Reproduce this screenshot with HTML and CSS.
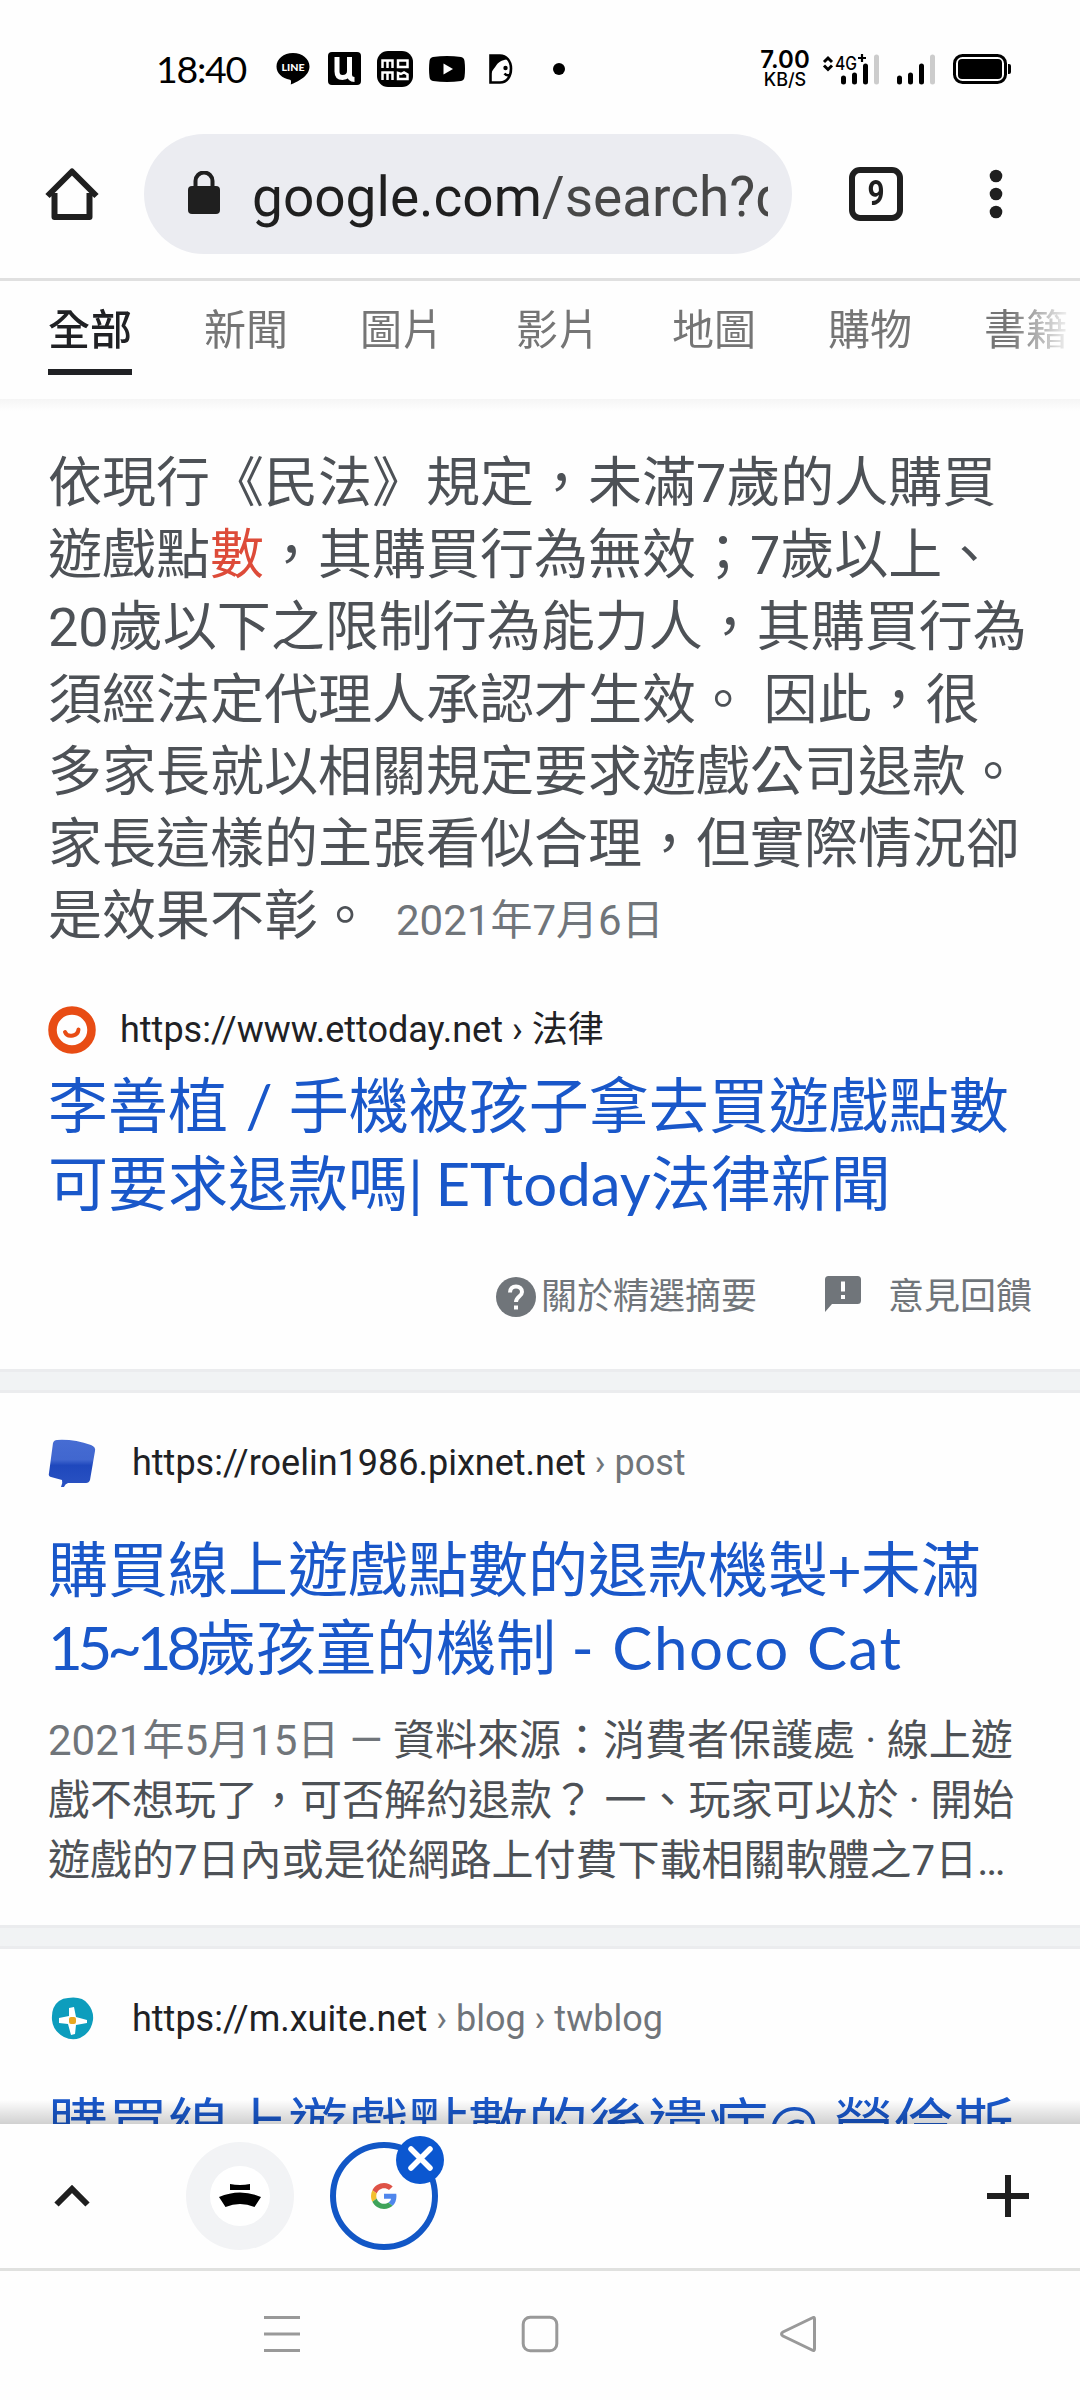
FILE: index.html
```html
<!DOCTYPE html>
<html lang="zh-Hant">
<head>
<meta charset="utf-8">
<title>google.com/search</title>
<link rel="stylesheet" href="styles.css">
</head>
<body>
<div class="screen">
  <header class="status">
    <span class="clock">18:40</span>
    <svg class="app line" width="36" height="36" viewBox="0 0 36 36"><path d="M18 2C8.500 2 1.500 8 1.500 15.500c0 6.500 5.500 12 13.500 13.200 1.500.5 1 2.300.8 4.800C22 31 34.500 25.500 34.500 15.500 34.500 8 27.500 2 18 2z"/><text x="18" y="20" text-anchor="middle" textLength="23" lengthAdjust="spacingAndGlyphs">LINE</text></svg>
    <svg class="app" width="33" height="33" viewBox="0 0 33 33"><rect width="33" height="33" rx="4"/><path class="u" d="M9 5v14.500c0 4 2 6 5.500 6 4 0 7-2.500 7-6.500V5M21.500 17v6c0 2.500 1.500 4.500 5 4.500"/></svg>
    <svg class="app" width="36" height="36" viewBox="0 0 36 36"><rect width="36" height="36" rx="11"/><path class="momo" d="M5.500 17V9.500h10V17M10.500 9.500V17M21 9.500h9.500V16H21zM5.500 29v-7.500h10V29M10.500 21.500V29"/><path class="momo" d="M21 28v-6l3 1 3-1.500 3.500 2V28z"/></svg>
    <svg class="app" width="36" height="26" viewBox="0 0 36 26"><path d="M4 1q14-2 28 0 3 .5 3.500 4 1 8 0 16-.5 3.500-3.500 4-14 2-28 0-3-.5-3.500-4-1-8 0-16Q1 1.500 4 1z"/><path class="white" d="M14.500 7.500v11L24 13z"/></svg>
    <svg class="app face" width="24" height="30" viewBox="0 0 24 30"><path class="face-line" d="M1.500 1.500h9.500c6 0 11 5 11 13s-4 14-11 14H1.500z"/><path d="M1 1h12c3 1 5 2 6.500 4.500-5 0-9 1.500-12 5.500C6 14 3 16 2.500 19L1 20z"/><circle cx="16.500" cy="14" r="2.200"/><path class="face-line" d="M15.500 19.500q2 2.500 5 1.500"/></svg>
    <i class="dot"></i>
    <div class="speed"><b>7.00</b><span>KB/S</span></div>
    <svg class="signal" width="60" height="36" viewBox="0 0 60 36"><path class="arrows" d="M2 11l4-4 4 4M2 14.500l4 4 4-4"/><text class="g4" x="13" y="18.500" textLength="22" lengthAdjust="spacingAndGlyphs">4G</text><path class="arrows thin" d="M36 7h8M40 3v8"/><path class="bars" d="M21.500 27v4M32.500 24v7M43.500 15v16"/><path class="bars off" d="M54.500 6v25"/></svg>
    <svg class="signal2" width="40" height="36" viewBox="0 0 40 36"><path class="bars" d="M2.500 27v4M13.500 24v7M24.500 15v16"/><path class="bars off" d="M35.500 6v25"/></svg>
    <svg class="battery" width="60" height="32" viewBox="0 0 60 32"><rect class="shell" x="1.500" y="2.500" width="51" height="27" rx="8"/><rect x="5" y="6" width="44" height="20" rx="4"/><path d="M55 11h1q2 0 2 2v6q0 2-2 2h-1z"/></svg>
  </header>

  <div class="toolbar">
    <svg class="home" width="56" height="56" viewBox="0 0 56 56"><path d="M10.500 27v24h35V27M3.500 30L28 5.500 52.500 30"/></svg>
    <div class="omnibox">
      <svg width="34" height="44" viewBox="0 0 34 44"><rect x="1" y="15" width="32" height="28" rx="4"/><path d="M8.500 17v-7a8.500 8.500 0 0 1 17 0v7"/></svg>
      <span class="url">google.com<em>/search?q</em></span>
    </div>
    <span class="tab-count"><b>9</b></span>
    <svg class="more" width="14" height="50" viewBox="0 0 14 50"><circle cx="7" cy="7" r="6.300"/><circle cx="7" cy="25" r="6.300"/><circle cx="7" cy="43" r="6.300"/></svg>
  </div>

  <nav class="tabs">
    <a class="on">全部</a><a>新聞</a><a>圖片</a><a>影片</a><a>地圖</a><a>購物</a><a>書籍</a>
  </nav>

  <main class="results">
    <section class="card featured">
      <p class="answer">依現行《民法》規定，未滿7歲的人購買<br>遊戲點<mark>數</mark>，其購買行為無效；7歲以上、<br>20歲以下之限制行為能力人，其購買行為<br>須經法定代理人承認才生效。 因此，很<br>多家長就以相關規定要求遊戲公司退款。<br>家長這樣的主張看似合理，但實際情況卻<br>是效果不彰。<time>2021年7月6日</time></p>
      <div class="source tight">
        <svg width="48" height="48" viewBox="0 0 48 48"><circle class="et-ring" cx="24" cy="24" r="19.500"/><path class="et-smile" d="M17 26q2 5 8 3.500 5-1 5.500-6"/></svg>
        <span>https://www.ettoday.net › 法律</span>
      </div>
      <h3 class="title">李善植 <span class="slash">/</span> 手機被孩子拿去買遊戲點數<br>可要求退款嗎| <span class="et">ETtoday</span>法律新聞</h3>
      <div class="links">
        <svg width="40" height="40" viewBox="0 0 40 40"><circle cx="20" cy="20" r="20"/><path class="q" d="M14 15.500c0-4 2.500-6 6-6s6 2.200 6 5.500c0 4.500-6 4.800-6 10"/><path class="q" d="M20 28.500v4"/></svg>
        <span>關於精選摘要</span>
        <svg class="fb" width="36" height="36" viewBox="0 0 36 36"><path d="M3.500 0h29Q36 0 36 3.500v21q0 3.500-3.500 3.500H7l-7 8V3.500Q0 0 3.500 0z"/><path class="q" d="M18 5.500v10M18 19v4"/></svg>
        <span>意見回饋</span>
      </div>
    </section>
    <section class="card second">
      <div class="source">
        <svg width="48" height="48" viewBox="0 0 48 48"><defs><linearGradient id="bubble" x2="0" y2="1"><stop stop-color="#466cd3"/><stop offset=".42" stop-color="#4167cf"/><stop offset=".54" stop-color="#1f48bd"/><stop offset="1" stop-color="#2a52c2"/></linearGradient></defs><path fill="url(#bubble)" d="M9 1q17-1 34 5 5 2 4 6l-5 29q-1 3-4 3H20q-3 1-4 4h-3q2-4 1-7L3 38q-3-1-2-4L5 4q1-3 4-3z"/></svg>
        <span>https://roelin1986.pixnet.net<em> › post</em></span>
      </div>
      <h3 class="title">購買線上遊戲點數的退款機製<span class="sum">+</span>未滿<br><span class="age">15~18</span>歲孩童的機制 <span class="cat">- Choco Cat</span></h3>
      <p class="desc"><em>2021年5月15日 — </em>資料來源：消費者保護處 · 線上遊<br>戲不想玩了，可否解約退款？ 一、玩家可以於 · 開始<br>遊戲的7日內或是從網路上付費下載相關軟體之7日…</p>
    </section>
    <section class="card third">
      <div class="source">
        <svg width="48" height="48" viewBox="0 0 48 48"><path class="xu" d="M20 3q14-2 20 6 6 7 5 16-2 13-13 18-8 3-16-1Q5 36 4 25 3 12 11 6q4-3 9-3z"/><path class="petals" d="M21 13l5-1 2 10 11 3v3l-11 2-1 9-4 1-3-11-9-1v-5l10-2z"/><rect class="pollen" x="21" y="22" width="7" height="7" rx="2"/></svg>
        <span>https://m.xuite.net<em> › blog › twblog</em></span>
      </div>
      <h3 class="title">購買線上遊戲點數的後遺症@ 勞倫斯</h3>
    </section>
  </main>

  <div class="strip">
    <svg class="up" width="40" height="26" viewBox="0 0 40 26"><path d="M4.500 21.500L20 6l15.500 15.500"/></svg>
    <div class="bubble">
      <span><svg width="44" height="26" viewBox="0 0 44 26"><path d="M12 1q10 2 20 0v6H12zM1 14q21-9 42 0l-6.500 10q-14.500-6-29 0z"/></svg></span>
    </div>
    <div class="bubble active">
      <svg class="g" width="26" height="26" viewBox="0 0 48 48"><path fill="#de5246" d="M24 9.500c3.540 0 6.710 1.220 9.210 3.600l6.850-6.850C35.900 2.380 30.470 0 24 0 14.620 0 6.510 5.380 2.560 13.220l7.980 6.190C12.430 13.720 17.740 9.500 24 9.500z"/><path fill="#4f86ec" d="M46.980 24.550c0-1.570-.15-3.090-.38-4.550H24v9.020h12.940c-.58 2.960-2.260 5.480-4.780 7.180l7.730 6c4.510-4.180 7.090-10.360 7.090-17.650z"/><path fill="#f2bf2e" d="M10.530 28.590A14.500 14.500 0 0 1 9.770 24c0-1.600.27-3.140.76-4.590l-7.980-6.190A23.900 23.900 0 0 0 0 24c0 3.880.92 7.540 2.560 10.780z"/><path fill="#3fa35a" d="M24 48c6.480 0 11.930-2.130 15.890-5.810l-7.730-6c-2.150 1.450-4.920 2.300-8.160 2.300-6.260 0-11.570-4.220-13.470-9.910l-7.980 6.190C6.510 42.620 14.620 48 24 48z"/></svg>
      <svg class="close" width="48" height="48" viewBox="0 0 48 48"><circle cx="24" cy="24" r="24"/><path d="M15 13l19 19M34 13L15 32"/></svg>
    </div>
    <svg class="plus" width="42" height="42" viewBox="0 0 42 42"><path d="M21 0v42M0 21h42"/></svg>
  </div>

  <footer class="sysnav">
    <svg width="38" height="38" viewBox="0 0 38 38"><path d="M1 2.500h36M1 19h36M1 35.500h36"/></svg>
    <svg width="38" height="38" viewBox="0 0 38 38"><rect x="2.200" y="2.200" width="33.600" height="33.600" rx="7"/></svg>
    <svg width="38" height="38" viewBox="0 0 38 38"><path d="M35.500 4v30q0 2.500-2.500 1L4 21q-3-2 0-4L33 3q2.500-1.500 2.500 1z"/></svg>
  </footer>
</div>
</body>
</html>
```

FILE: styles.css
```css
* { box-sizing: border-box; }
body {
  margin: 0;
  background: #fff;
  font-family: Roboto, "Noto Sans CJK TC", sans-serif;
  text-spacing-trim: space-all;
}
em { font-style: normal; }
svg { display: block; flex: none; }
h3, p { margin: 0; font-weight: 400; }

.screen {
  width: 1080px;
  height: 2400px;
  display: flex;
  flex-direction: column;
  overflow: hidden;
  background: #fefefe;
}

/* Status bar */
.status {
  height: 134px;
  padding: 3px 67px 0 156px;
  display: flex;
  align-items: center;
}
.clock { font: 37.500px/44px Lato, sans-serif; width: 119px; letter-spacing: -1.300px; }
.app { margin-right: 16px; }
.app.line { margin-right: 17px; }
.line text { font: 900 9.500px Lato, sans-serif; fill: #fff; }
.white { fill: #fff; }
.u { fill: none; stroke: #fff; stroke-width: 5; }
.momo { fill: none; stroke: #fff; stroke-width: 2.500; }
.face { margin-left: 8px; }
.face-line { fill: none; stroke: #000; stroke-width: 2.600; }
.dot { width: 12px; height: 12px; margin-left: 24px; border-radius: 50%; background: #000; }
.speed {
  width: 62px;
  margin-left: auto;
  display: flex;
  flex-direction: column;
  align-items: center;
  font-family: Inter, sans-serif;
}
.speed b { font-size: 24px; line-height: 22px; font-weight: 600; }
.speed span { font-size: 18px; line-height: 18px; font-weight: 500; }
.signal { margin-left: 6px; }
.signal2 { margin-left: 15px; }
.g4 { font: 500 18px Inter, sans-serif; }
.arrows { fill: none; stroke: #000; stroke-width: 3; }
.arrows.thin { stroke-width: 2.200; }
.bars { stroke: #000; stroke-width: 5; stroke-linecap: round; }
.bars.off { stroke: #ccc; }
.battery { margin-left: 16px; }
.shell { fill: none; stroke: #000; stroke-width: 3; }

/* Browser toolbar */
.toolbar {
  height: 147px;
  padding: 0 77px 24px 44px;
  border-bottom: 3px solid #e0e0e0;
  display: flex;
  align-items: center;
  justify-content: space-between;
}
.home path { fill: none; stroke: #1f1f1f; stroke-width: 6; stroke-linejoin: round; }
.omnibox {
  width: 648px;
  height: 120px;
  margin-right: 13px;
  padding: 0 24px 0 43px;
  border-radius: 60px;
  background: #ebecf1;
  display: flex;
  align-items: center;
}
.omnibox svg { fill: #1f1f1f; margin-bottom: 2px; }
.omnibox svg path { fill: none; stroke: #1f1f1f; stroke-width: 4; }
.url {
  flex: 1;
  margin-left: 31px;
  overflow: hidden;
  white-space: nowrap;
  font-size: 55px;
  line-height: 76px;
  padding-top: 6px;
  color: #1f1f1f;
}
.url em { color: #474747; }
.tab-count {
  width: 54px;
  height: 54px;
  margin-right: 42px;
  border: 6px solid #1f1f1f;
  border-radius: 11px;
  font-size: 35px;
  line-height: 42px;
  text-align: center;
  color: #1f1f1f;
}
.tab-count b { display: block; transform: scaleX(.85); }
.more { fill: #1f1f1f; }

/* Search categories */
.tabs {
  height: 118px;
  padding-left: 48px;
  display: flex;
  gap: 72px;
  overflow: hidden;
  font-size: 42px;
  line-height: 60px;
  mask-image: linear-gradient(90deg, #000 1010px, transparent 1074px);
}
.tabs a { flex: none; width: 84px; height: 94px; padding-top: 20px; color: #757575; }
.tabs .on { border-bottom: 6px solid #202124; font-weight: 500; color: #202124; }

/* Results */
.results {
  height: 1725px;
  overflow: hidden;
  background: linear-gradient(#f5f5f5, #fefefe 12px);
  white-space: nowrap;
  position: relative;
}
.results::after {
  content: "";
  position: absolute;
  inset: auto 0 0;
  height: 24px;
  background: linear-gradient(transparent, rgba(0, 0, 0, .18));
}
.card { padding: 0 48px; }
.card + .card { border-top: 3px solid #ebecee; }
.card:not(:last-child) { border-bottom: 3px solid #ebecee; }
.card:not(:last-child) + .card { box-shadow: 0 -18px #f1f3f4; margin-top: 18px; }
.featured { height: 973px; padding-top: 49px; }
.answer { font-size: 54px; line-height: 72.200px; color: #4d5156; }
.answer mark { background: none; color: #dd4b39; }
.answer time { margin-left: 24px; font-size: 42px; color: #70757a; }
.source {
  height: 50px;
  display: flex;
  align-items: center;
  gap: 36px;
  font-size: 36px;
  line-height: 50px;
  color: #202124;
}
.source.tight { gap: 24px; margin-top: 48px; }
.source em { color: #70757a; }
.et-ring { fill: none; stroke: #e84c14; stroke-width: 8.500; }
.et-smile { fill: none; stroke: #e84c14; stroke-width: 4; stroke-linecap: round; }
.title {
  font-family: Lato, "Noto Sans CJK TC", sans-serif;
  font-size: 60px;
  line-height: 78px;
  color: #1957c9;
}
.featured .title { margin-top: 11px; }
.slash { margin: 0 1px 0 2px; }
.et { margin-left: -3px; }
.sum { margin: 0 -1px; }
.age { letter-spacing: -5.200px; }
.cat { letter-spacing: 1.600px; }
.links {
  margin-top: 53px;
  height: 44px;
  display: flex;
  align-items: center;
  justify-content: flex-end;
  font-size: 36px;
  line-height: 44px;
  color: #70757a;
  fill: #70757a;
}
.links svg:first-child { margin-right: 5px; }
.links .fb { margin: 0 27px 6px 68px; }
.q { fill: none; stroke: #fefefe; stroke-width: 4; }
.second { height: 538px; padding-top: 45px; }
.second .title, .third .title { margin-top: 42px; }
.desc { margin-top: 25px; font-size: 42px; line-height: 60px; color: #4d5156; }
.desc em { color: #70757a; }
.third { height: 200px; padding-top: 45px; }
.xu { fill: #0d9dbd; }
.petals { fill: #fff; }
.pollen { fill: #eaa820; }

/* Tab strip */
.strip {
  height: 147px;
  padding: 0 51px 0 52px;
  border-bottom: 3px solid #e0e1df;
  display: flex;
  align-items: center;
}
.up path { fill: none; stroke: #1f1f1f; stroke-width: 6; }
.bubble {
  position: relative;
  width: 108px;
  height: 108px;
  margin-left: 94px;
  border-radius: 50%;
  background: #f2f3f5;
  display: grid;
  place-items: center;
}
.bubble span {
  width: 60px;
  height: 60px;
  border-radius: 50%;
  background: #fff;
  display: grid;
  place-items: center;
}
.bubble.active { margin-left: 36px; background: none; border: 6px solid #1257c6; }
.close { position: absolute; top: -12px; right: -12px; fill: #0b57d0; }
.close path { stroke: #fff; stroke-width: 5.500; stroke-linecap: round; }
.plus { margin-left: auto; }
.plus path { stroke: #1f1f1f; stroke-width: 6; }

/* System navigation */
.sysnav {
  height: 129px;
  padding: 0 263px 3px;
  display: flex;
  align-items: center;
  justify-content: space-between;
  fill: none;
  stroke: #999;
  stroke-width: 3;
}
```
